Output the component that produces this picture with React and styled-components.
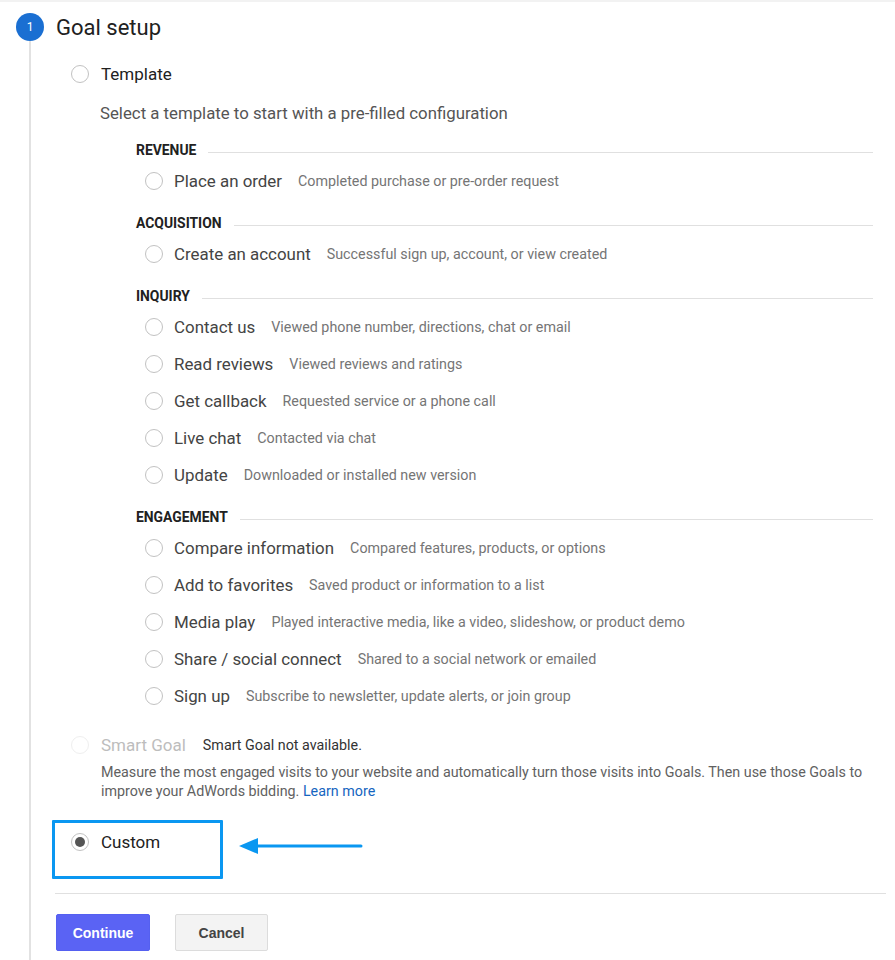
import React from "react";
import styled, { createGlobalStyle } from "styled-components";

const GlobalStyle = createGlobalStyle`
  html, body {
    margin: 0;
    padding: 0;
    background: #fff;
  }
  body {
    font-family: Roboto, "Noto Sans", Arial, sans-serif;
    color: #212121;
  }
  * { box-sizing: border-box; }
`;

const Page = styled.div`
  display: flex;
  min-height: 100vh;
  border-top: 2px solid #f2f2f2;
`;

const Rail = styled.div`
  width: 44px;
  padding: 11px 0 0 16px;
  display: flex;
  flex-direction: column;
  align-items: center;
`;

const Badge = styled.div`
  width: 28px;
  height: 28px;
  border-radius: 50%;
  background: #1a6fd2;
  color: #fff;
  font-size: 12px;
  display: flex;
  align-items: center;
  justify-content: center;
`;

const RailLine = styled.div`
  flex: 1;
  width: 2px;
  background: #e2e2e2;
`;

const Content = styled.div`
  flex: 1;
  margin-left: 12px;
  padding: 11px 9px 0 0;
`;

const TitleRow = styled.div`
  height: 28px;
  display: flex;
  align-items: center;
`;

const Title = styled.h2`
  margin: 0;
  font-size: 22px;
  font-weight: 400;
  color: #212121;
`;

const OptionRow = styled.label`
  display: flex;
  align-items: center;
  gap: 12px;
  height: 24px;
  padding-left: ${p => p.$indent ?? 15}px;
  margin-top: ${p => p.$top ?? 0}px;
`;

const Radio = styled.span`
  width: 18px;
  height: 18px;
  flex: none;
  border-radius: 50%;
  border: 1px solid ${p => (p.$disabled ? "#efefef" : "#c2c2c2")};
  display: flex;
  align-items: center;
  justify-content: center;
  &::after {
    content: "";
    display: ${p => (p.$checked ? "block" : "none")};
    width: 10px;
    height: 10px;
    border-radius: 50%;
    background: #555;
  }
`;

const OptionText = styled.span`
  font-size: 17px;
  color: ${p => (p.$disabled ? "#bdbdbd" : "#212121")};
`;

const Note = styled.span`
  font-size: 14.3px;
  color: #333;
  margin-left: 5px;
`;

const Hint = styled.p`
  margin: 17px 0 0;
  padding-left: 44px;
  font-size: 16.8px;
  line-height: 20px;
  color: #555;
`;

const Groups = styled.div`
  margin: 17px 13px 0 80px;
`;

const Group = styled.section`
  & + & {
    margin-top: 14px;
  }
`;

const GroupHeader = styled.div`
  display: flex;
  align-items: center;
  gap: 12px;
  height: 20px;
  margin-bottom: 2px;
`;

const GroupLabel = styled.span`
  font-size: 13.9px;
  font-weight: 700;
  color: #212121;
  text-transform: uppercase;
`;

const Rule = styled.div`
  flex: 1;
  height: 1px;
  margin-top: 5px;
  background: #e0e0e0;
`;

const Item = styled.label`
  display: flex;
  align-items: center;
  height: 37px;
  padding-left: 9px;
`;

const ItemLabel = styled.span`
  font-size: 16.9px;
  color: #444;
  margin-left: 11px;
`;

const ItemDesc = styled.span`
  font-size: 14.3px;
  color: #757575;
  margin-left: 16px;
`;

const SmartDesc = styled.p`
  margin: 6px 0 0;
  padding-left: 45px;
  font-size: 14.3px;
  line-height: 19px;
  color: #616161;
`;

const Link = styled.a`
  color: #1565c0;
  text-decoration: none;
`;

const CustomArea = styled.div`
  display: flex;
  align-items: flex-start;
  margin: 19px 0 0 -4px;
`;

const Highlight = styled.div`
  width: 171px;
  border: 3px solid #0a97f1;
  border-radius: 1px;
  padding: 7px 0 22px 16px;
`;

const Arrow = styled.svg`
  margin: 16px 0 0 16px;
  flex: none;
`;

const Divider = styled.div`
  height: 1px;
  background: #e0e0e0;
  margin: 14px 0 0 -1px;
`;

const Actions = styled.div`
  display: flex;
  gap: 25px;
  margin-top: 20px;
`;

const Button = styled.button`
  height: 37px;
  width: ${p => p.$w}px;
  border-radius: 2px;
  font-family: "Liberation Sans", Arial, sans-serif;
  font-size: 14px;
  font-weight: 700;
  cursor: pointer;
  border: 1px solid ${p => (p.$primary ? "#5560f0" : "#dcdcdc")};
  background: ${p => (p.$primary ? "#5a63f4" : "#f3f3f3")};
  color: ${p => (p.$primary ? "#fff" : "#444")};
`;

const groups = [
  {
    name: "Revenue",
    items: [["Place an order", "Completed purchase or pre-order request"]],
  },
  {
    name: "Acquisition",
    items: [["Create an account", "Successful sign up, account, or view created"]],
  },
  {
    name: "Inquiry",
    items: [
      ["Contact us", "Viewed phone number, directions, chat or email"],
      ["Read reviews", "Viewed reviews and ratings"],
      ["Get callback", "Requested service or a phone call"],
      ["Live chat", "Contacted via chat"],
      ["Update", "Downloaded or installed new version"],
    ],
  },
  {
    name: "Engagement",
    items: [
      ["Compare information", "Compared features, products, or options"],
      ["Add to favorites", "Saved product or information to a list"],
      ["Media play", "Played interactive media, like a video, slideshow, or product demo"],
      ["Share / social connect", "Shared to a social network or emailed"],
      ["Sign up", "Subscribe to newsletter, update alerts, or join group"],
    ],
  },
];

const App = () => {
  return (
    <>
      <GlobalStyle />
      <Page>
        <Rail>
          <Badge>1</Badge>
          <RailLine />
        </Rail>
        <Content>
          <TitleRow>
            <Title>Goal setup</Title>
          </TitleRow>

          <OptionRow $top={21}>
            <Radio />
            <OptionText>Template</OptionText>
          </OptionRow>
          <Hint>Select a template to start with a pre-filled configuration</Hint>

          <Groups>
            {groups.map(g => (
              <Group key={g.name}>
                <GroupHeader>
                  <GroupLabel>{g.name}</GroupLabel>
                  <Rule />
                </GroupHeader>
                {g.items.map(([label, desc]) => (
                  <Item key={label}>
                    <Radio />
                    <ItemLabel>{label}</ItemLabel>
                    <ItemDesc>{desc}</ItemDesc>
                  </Item>
                ))}
              </Group>
            ))}
          </Groups>

          <OptionRow $top={19}>
            <Radio $disabled />
            <OptionText $disabled>Smart Goal</OptionText>
            <Note>Smart Goal not available.</Note>
          </OptionRow>
          <SmartDesc>
            Measure the most engaged visits to your website and automatically turn those visits into Goals. Then use those Goals to improve your AdWords bidding. <Link href="#">Learn more</Link>
          </SmartDesc>

          <CustomArea>
            <Highlight>
              <OptionRow $indent={0}>
                <Radio $checked />
                <OptionText>Custom</OptionText>
              </OptionRow>
            </Highlight>
            <Arrow width="124" height="20" viewBox="0 0 124 20">
              <polygon points="0,10 19,2 19,18" fill="#0a97f1" />
              <line x1="17" y1="10" x2="122" y2="10" stroke="#0a97f1" strokeWidth="3" strokeLinecap="round" />
            </Arrow>
          </CustomArea>

          <Divider />

          <Actions>
            <Button $primary $w={94}>Continue</Button>
            <Button $w={93}>Cancel</Button>
          </Actions>
        </Content>
      </Page>
    </>
  );
};

export default App;
